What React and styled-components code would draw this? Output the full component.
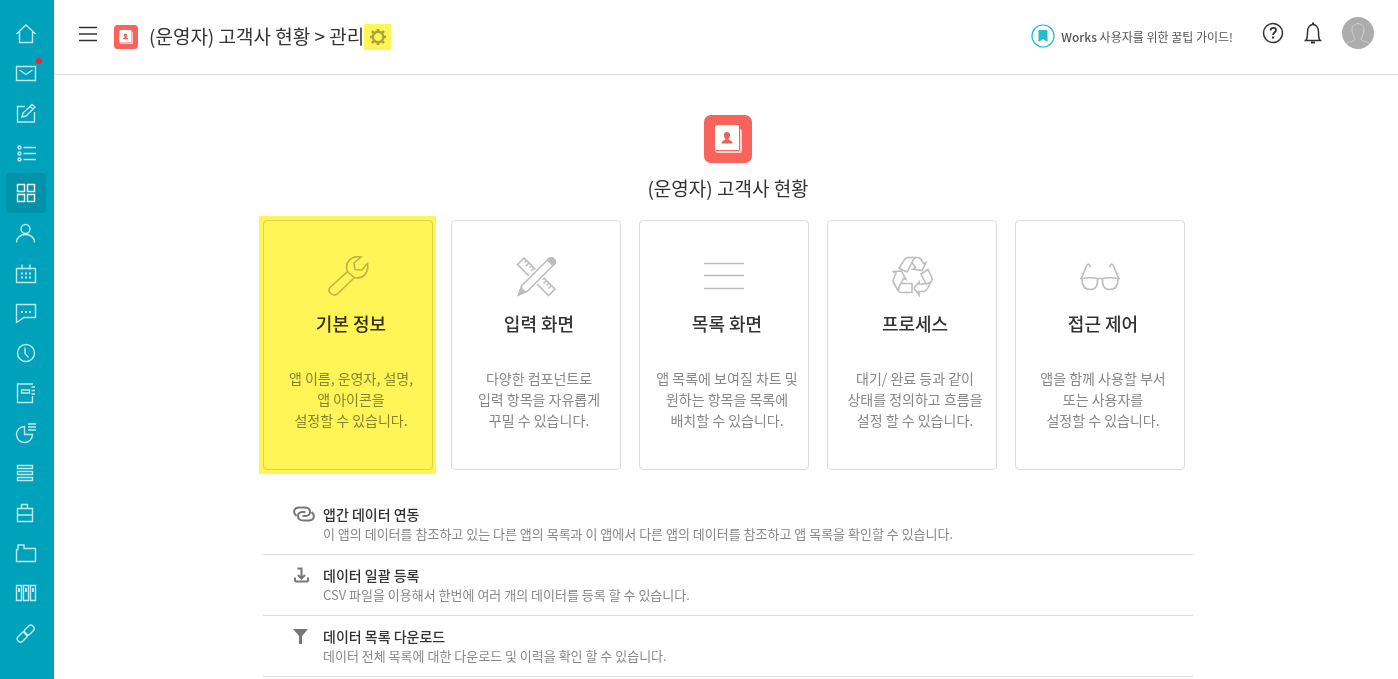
import React from 'react'
import styled, { createGlobalStyle } from 'styled-components'

const sideMenu = [
    { label: '홈', icon: <path d="M1.5 12 11 3l9.5 9M4.5 10v10.5h13V10" /> },
    { label: '메일', badge: true, icon: <path d="M1.5 4.5h19v14h-19zM4.5 8l6.500 4.500L17.500 8" /> },
    { label: '게시판', icon: <path d="M10 4.500H2.500v15.500h17v-10M7 15l1-4L17 2.500l3 2.500-9 9zM15 4.500l3 2.500" /> },
    {
        label: '할 일',
        icon: <><circle cx="4.5" cy="5.5" r="1.5" /><circle cx="4.5" cy="11.5" r="1.5" /><circle cx="4.5" cy="17.5" r="1.5" /><path d="M8.5 5.5H21M8.5 11.5H21M8.5 17.5H21" /></>,
    },
    { label: 'Works', active: true, icon: <path d="M2.5 2.5h7v7h-7zM12.5 2.5h7v7h-7zM2.5 12.5h7v7h-7zM12.5 12.5h7v7h-7z" /> },
    { label: '주소록', icon: <><circle cx="10.5" cy="7" r="4.5" /><path d="M1.500 20.500c0-5 4-8 9-8s9 3 9 8" /></> },
    {
        label: '캘린더',
        icon: <><path d="M1.5 6.5h19v14h-19zM7 2.5v5M15 2.5v5" /><path d="M6 11.5h2m2 0h2m2 0h2M6 15.5h2m2 0h2m2 0h2" strokeWidth="2" /></>,
    },
    { label: '대화', icon: <><path d="M1.5 2.5h19v13H9l-7.5 5z" /><path d="M6 10h2m2 0h2m2 0h2" strokeWidth="2" /></> },
    { label: '근태', icon: <><circle cx="11" cy="11" r="8.5" /><path d="M10 5.5v6l3.5 4" /></> },
    { label: '보고', icon: <path d="M18 2H2.5v18.5h15V14M16.5 5H20M16.5 8.5H20M16.5 12H20M6.5 8h8v3h-8z" /> },
    { label: '설문', icon: <path d="M9.5 4.500a8 8 0 1 0 8 8h-8zM13 2h8M13 5h8M13 8h8" /> },
    { label: '전자결재', icon: <path d="M2.5 3.5h15v3h-15zM2.5 9.5h15v3h-15zM2.5 15.5h15v3h-15z" /> },
    { label: '업무', icon: <path d="M2.5 6.5h15v13h-15zM6.5 6.5v-4h6v4M2.5 13h15" /> },
    { label: '자료실', icon: <path d="M1.5 19.5v-12H3V3h6v3.5h11.5v13z" /> },
    {
        label: '문서함',
        icon: <><path d="M1.5 3.5h5v15h-5zM8.5 3.5h5v15h-5zM15.5 3.5h5v15h-5z" /><path d="M4 6v4M11 6v4M18 6v4" strokeWidth="2" /></>,
    },
    {
        label: '링크',
        icon: <g transform="rotate(-45 10.5 11.5)"><rect x="0" y="8.5" width="11" height="6.5" rx="3" /><rect x="10" y="8.5" width="11" height="6.5" rx="3" /></g>,
    },
]

const cards = [
    {
        title: '기본 정보',
        lines: ['앱 이름, 운영자, 설명,', '앱 아이콘을', '설정할 수 있습니다.'],
        marked: true,
        icon: <path d="M34 1l-7 6 1 6.5 7 .5 5.5-6.500c1.500 9-4 16-13 14L11.500 37C7 42-1 36 3 31.500L20.500 15.500C17 6 25-1 34 1zM20.500 15.500l6.500 6" />,
    },
    {
        title: '입력 화면',
        lines: ['다양한 컴포넌트로', '입력 항목을 자유롭게', '꾸밀 수 있습니다.'],
        icon: (
            <>
                <path d="M9 2 2.5 8.5l31 31L40 33zM11.5 4.5l-2 2M14 7l-3 3M16.5 9.5l-2 2M19 12l-3 3M29 22l-2 2M31.5 24.5l-3 3M34 27l-2 2M36.5 29.5l-3 3" />
                <path d="M3.5 39l3.5-9.5L33.5 3q3-2.5 5.5 0t0 5.5L12.5 35z" fill="#fff" stroke="#fff" strokeWidth="4" />
                <path d="M3.5 39l3.5-9.5L33.5 3q3-2.5 5.5 0t0 5.5L12.5 35z" fill="#fff" />
                <path d="M3.5 39l2.5-7 4 4zM32.5 4q3-4 6.5-1t-1 6.5z" fill="#bdbdbd" />
            </>
        ),
    },
    {
        title: '목록 화면',
        lines: ['앱 목록에 보여질 차트 및', '원하는 항목을 목록에', '배치할 수 있습니다.'],
        icon: <path d="M1 7.5h40M1 19.5h40M1 32.5h40" />,
    },
    {
        title: '프로세스',
        lines: ['대기/ 완료 등과 같이', '상태를 정의하고 흐름을', '설정 할 수 있습니다.'],
        icon: (
            <>
                <path d="M8 12.500 13.500 3.500Q15 1.500 17 1.500H26.500Q29 1.500 30 3.500L32.500 7.500l2.500-1-4 8-9-1.500 2.500-1.500-3.500-5L16 16zM21 6.500q1-4 4-5" />
                <path d="M30 18l7-4.500 3.500 7.500q1 2 0 4l-3.500 6.500q-1.500 3-4 4H28v3.500L23 32l5-6v2h6q1.500 0 1 0zM34 28q3 0 5-2" />
                <path d="M1.500 15.500l9-.5 4.500 8.500-2.500-1-2.500 5h11v9H10q-2 0-3-2L2.500 26.500q-1-1.500 0-3.500L5 17zM10 27.500q-2.500 2.500-2.500 7" />
            </>
        ),
    },
    {
        title: '접근 제어',
        lines: ['앱을 함께 사용할 부서', '또는 사용자를', '설정할 수 있습니다.'],
        icon: <path d="M11.500 11.500C11 7.500 8.500 7.500 7.500 10L2.500 22M30.500 11.500c.5-4 3-4 4-1.500l5 12M1 22.500h2q8-1.500 15.500 0h5q7.500-1.500 15.500 0h2M3 22.500c0 7 2 11 8 11s8-4 7.500-11M39 22.500c0 7-2 11-8 11s-8-4-7.500-11" />,
    },
]

const features = [
    {
        title: '앱간 데이터 연동',
        text: '이 앱의 데이터를 참조하고 있는 다른 앱의 목록과 이 앱에서 다른 앱의 데이터를 참조하고 앱 목록을 확인할 수 있습니다.',
        icon: <path d="M3.500 10C-1 6 1.500 1.500 6 1.500h5.500c7 0 7.500 8.500 1 8.500H9.500M18.500 6c4.500 4 2 8.500-2.500 8.500h-5.500c-7 0-7.500-8.500-1-8.500H12.500" />,
    },
    {
        title: '데이터 일괄 등록',
        text: 'CSV 파일을 이용해서 한번에 여러 개의 데이터를 등록 할 수 있습니다.',
        icon: <path d="M4.500 1.500h4V11M5 8l3.500 3.500L12 8M2 10.500V13q0 1.500 1.500 1.500h10Q15 14.500 15 13v-2.500" />,
    },
    {
        title: '데이터 목록 다운로드',
        text: '데이터 전체 목록에 대한 다운로드 및 이력을 확인 할 수 있습니다.',
        icon: <path d="M0 1h15L9 8v8H6V8z" fill="#777" stroke="none" />,
    },
]

const BookIcon = ({ size }) => (
    <AppIcon size={size} viewBox="0 0 48 48" aria-hidden="true">
        <rect width="48" height="48" rx="7" fill="#f8645c" />
        <path d="M15 14h21q2 0 2 2v20q0 2-2 2H14q-3 0-3-3V17z" fill="#fdd5d2" />
        <path d="M13 10h20q2 0 2 2v23H13q-2 0-2-2V12q0-2 2-2z" fill="#fff" />
        <path d="M12 35.5h23.5V14" fill="none" stroke="#f8645c" />
        <path d="M23 17c2.500 0 3.500 2 3 4q-.5 2-1.500 3c0 1.500 4 1 4 4.500h-11c0-3.500 4-3 4-4.500q-1-1-1.500-3c-.5-2 .5-4 3-4z" fill="#e9625f" />
    </AppIcon>
)

function App() {
    return (
        <Page>
            <GlobalStyle />
            <Sidebar aria-label="주 메뉴">
                {sideMenu.map((item) => (
                    <SideLink key={item.label} href="#" aria-label={item.label} $active={item.active}>
                        <SideIcon viewBox="0 0 22 22" aria-hidden="true">{item.icon}</SideIcon>
                        {item.badge && <Badge />}
                    </SideLink>
                ))}
            </Sidebar>

            <Main>
                <Header>
                    <MenuButton aria-label="메뉴 열기">
                        <svg width="20" height="16" viewBox="0 0 20 16" stroke="#333" strokeWidth="1.5">
                            <path d="M1 1.5h18M1 8h18M1 14.500h18" />
                        </svg>
                    </MenuButton>
                    <Brand>
                        <BookIcon size={24} />
                        <PageTitle>(운영자) 고객사 현황 &gt; 관리</PageTitle>
                        <GearButton aria-label="설정">
                            <svg width="18" height="18" viewBox="0 0 18 18" fill="none" stroke="#aaa43c">
                                <circle cx="9" cy="9" r="5.2" strokeWidth="2.400" />
                                <path d="M9 1v2.500M9 14.500V17M1 9h2.500M14.500 9H17M3 3l2 2M13 13l2 2M3 15l2-2M13 5l2-2" strokeWidth="2.600" />
                            </svg>
                        </GearButton>
                    </Brand>
                    <Guide href="#">
                        <svg width="24" height="24" viewBox="0 0 24 24" aria-hidden="true">
                            <circle cx="12" cy="12" r="11" fill="none" stroke="#22bccb" strokeWidth="1.200" />
                            <path d="M7.500 7q0-1 1-1h7q1 0 1 1v11L12 15l-4.500 3z" fill="#22bccb" />
                        </svg>
                        <span><b>Works</b> 사용자를 위한 꿀팁 가이드!</span>
                    </Guide>
                    <Tools>
                        <ToolButton aria-label="도움말">
                            <svg width="22" height="22" viewBox="0 0 22 22" fill="none" stroke="#333" strokeWidth="1.5">
                                <circle cx="11" cy="11" r="9.5" />
                                <path d="M8.500 8.500c0-3.500 5.500-3.500 5.500-.5 0 2.500-3 2.500-3 5" strokeWidth="1.800" />
                                <path d="M11 14.500v2" strokeWidth="2" />
                            </svg>
                        </ToolButton>
                        <ToolButton aria-label="알림">
                            <svg width="22" height="22" viewBox="0 0 22 22" fill="none" stroke="#333" strokeWidth="1.5">
                                <path d="M2.500 18.500h17M4 18.500c1.500-2 1.500-4 1.500-8.500 0-10 11-10 11 0 0 4.500 0 6.500 1.500 8.500" />
                                <path d="M9 20.500h4M11 .5V2" strokeWidth="2" />
                            </svg>
                        </ToolButton>
                        <Profile aria-label="내 프로필">
                            <svg width="32" height="32" viewBox="0 0 32 32" fill="none" stroke="#d2d2d2">
                                <circle cx="16" cy="16" r="16" fill="#acacac" stroke="none" />
                                <path d="M4.500 27c1.500-3 8-2 8.500-5 0-2-3-4-3-9 0-4 2-5 4-5.500l1-1.500c3 1.500 7 1 7 6.500 0 5-2.500 7.500-3 9.500 0 3 7 2 8.500 5" />
                            </svg>
                        </Profile>
                    </Tools>
                </Header>

                <Content>
                    <Settings>
                        <Intro>
                            <BookIcon size={48} />
                            <AppName>(운영자) 고객사 현황</AppName>
                        </Intro>
                        <CardGrid>
                            {cards.map((card) => (
                                <Card key={card.title} href="#" $marked={card.marked}>
                                    <CardIcon viewBox="0 0 42 42" aria-hidden="true">{card.icon}</CardIcon>
                                    <CardTitle>{card.title}</CardTitle>
                                    <CardText>
                                        {card.lines.map((line) => <span key={line}>{line}</span>)}
                                    </CardText>
                                </Card>
                            ))}
                        </CardGrid>
                        <FeatureList>
                            {features.map((item) => (
                                <li key={item.title}>
                                    <Feature href="#">
                                        <FeatureIcon viewBox="0 0 22 16" aria-hidden="true">{item.icon}</FeatureIcon>
                                        <div>
                                            <FeatureTitle>{item.title}</FeatureTitle>
                                            <FeatureText>{item.text}</FeatureText>
                                        </div>
                                    </Feature>
                                </li>
                            ))}
                        </FeatureList>
                    </Settings>
                </Content>
            </Main>
        </Page>
    )
}

export default App

const GlobalStyle = createGlobalStyle`
    * {
        box-sizing: border-box;
    }

    body {
        margin: 0;
        background: #fff;
        color: #333;
        font-family: "Noto Sans CJK KR", "Noto Sans", sans-serif;
        font-size: 14px;
    }

    a {
        color: inherit;
        text-decoration: none;
    }

    button {
        padding: 0;
        border: none;
        background: none;
        cursor: pointer;
    }

    svg {
        display: block;
        flex: none;
    }
`

const Page = styled.div`
    display: flex;
    min-height: 100vh;
`

const Sidebar = styled.nav`
    display: flex;
    flex-direction: column;
    flex: none;
    width: 54px;
    padding: 13px 8px 0 6px;
    background-color: #00a2bb;
`

const SideLink = styled.a`
    position: relative;
    display: flex;
    align-items: center;
    justify-content: center;
    height: 40px;
    border-radius: 4px;
    color: ${props => props.$active ? '#fff' : 'rgba(255, 255, 255, 0.75)'};
    background-color: ${props => props.$active ? '#0092a8' : 'transparent'};
`

const SideIcon = styled.svg`
    width: 22px;
    height: 22px;
    fill: none;
    stroke: currentColor;
    stroke-width: 1.4;
`

const Badge = styled.i`
    position: absolute;
    top: 5px;
    right: 4px;
    width: 6px;
    height: 6px;
    border-radius: 50%;
    background-color: #fb2121;
`

const Main = styled.main`
    flex: 1;
    min-width: 0;
`

const Header = styled.header`
    display: flex;
    align-items: flex-start;
    padding: 0 24px;
    border-bottom: 1px solid #ddd;
`

const MenuButton = styled.button`
    display: flex;
    align-items: center;
    height: 68px;
    margin-right: 16px;
`

const Brand = styled.div`
    display: flex;
    align-items: center;
    height: 74px;
`

const AppIcon = styled.svg`
    width: ${props => props.size}px;
    height: ${props => props.size}px;
`

const PageTitle = styled.h1`
    margin: 0 0 0 11px;
    padding-bottom: 2px;
    font-size: 19px;
    line-height: 28px;
    font-weight: 400;
    white-space: nowrap;
`

const GearButton = styled.button`
    && {
        display: flex;
        align-items: center;
        justify-content: center;
        width: 27px;
        height: 26px;
        background-color: #fff557;
    }
`

const Guide = styled.a`
    display: flex;
    align-items: center;
    gap: 6px;
    height: 72px;
    margin-left: auto;
    color: #555;
    font-size: 12px;
    white-space: nowrap;

    b {
        font-weight: 500;
    }
`

const Tools = styled.div`
    display: flex;
    align-items: center;
    gap: 18px;
    height: 66px;
    margin-left: 29px;
`

const ToolButton = styled.button`
    width: 22px;
    height: 22px;
`

const Profile = styled.button`
    width: 32px;
    height: 32px;
`

const Content = styled.div`
    padding: 40px 0 0 4px;
`

const Settings = styled.section`
    max-width: 930px;
    margin: 0 auto;
`

const Intro = styled.div`
    display: flex;
    flex-direction: column;
    align-items: center;
`

const AppName = styled.h2`
    margin: 11px 0 18px;
    font-size: 19px;
    line-height: 28px;
    font-weight: 400;
`

const CardGrid = styled.div`
    display: grid;
    grid-template-columns: repeat(5, 1fr);
    gap: 18px;
    padding-right: 8px;
`

const Card = styled.a`
    position: relative;
    display: flex;
    flex-direction: column;
    align-items: center;
    min-height: 250px;
    padding-top: 35px;
    border: 1px solid #ddd;
    border-radius: 4px;

    /* highlighter mark over the whole card */
    &::after {
        content: '';
        display: ${props => props.$marked ? 'block' : 'none'};
        position: absolute;
        inset: -5px -4px -5px -5px;
        background-color: #fff557;
        mix-blend-mode: multiply;
    }
`

const CardIcon = styled.svg`
    width: 42px;
    height: 42px;
    fill: none;
    stroke: #bdbdbd;
    stroke-width: 1.6;
`

const CardTitle = styled.h3`
    margin: 11px 0 31px;
    padding-left: 6px;
    font-size: 18px;
    line-height: 28px;
    font-weight: 500;
`

const CardText = styled.p`
    display: flex;
    flex-direction: column;
    align-items: center;
    margin: 0;
    padding-left: 6px;
    color: #888;
    font-size: 14px;
    line-height: 21px;
    white-space: nowrap;
`

const FeatureList = styled.ul`
    margin: 24px 0 0;
    padding: 0;
    list-style: none;
`

const Feature = styled.a`
    display: flex;
    gap: 8px;
    padding: 10px 0 10px 30px;
    border-bottom: 1px solid #ddd;
    line-height: 20px;
`

const FeatureIcon = styled.svg`
    width: 22px;
    height: 16px;
    margin-top: 2px;
    fill: none;
    stroke: #777;
    stroke-width: 2;
`

const FeatureTitle = styled.strong`
    display: block;
    font-size: 14px;
    font-weight: 500;
`

const FeatureText = styled.span`
    display: block;
    color: #888;
    font-size: 13px;
`
